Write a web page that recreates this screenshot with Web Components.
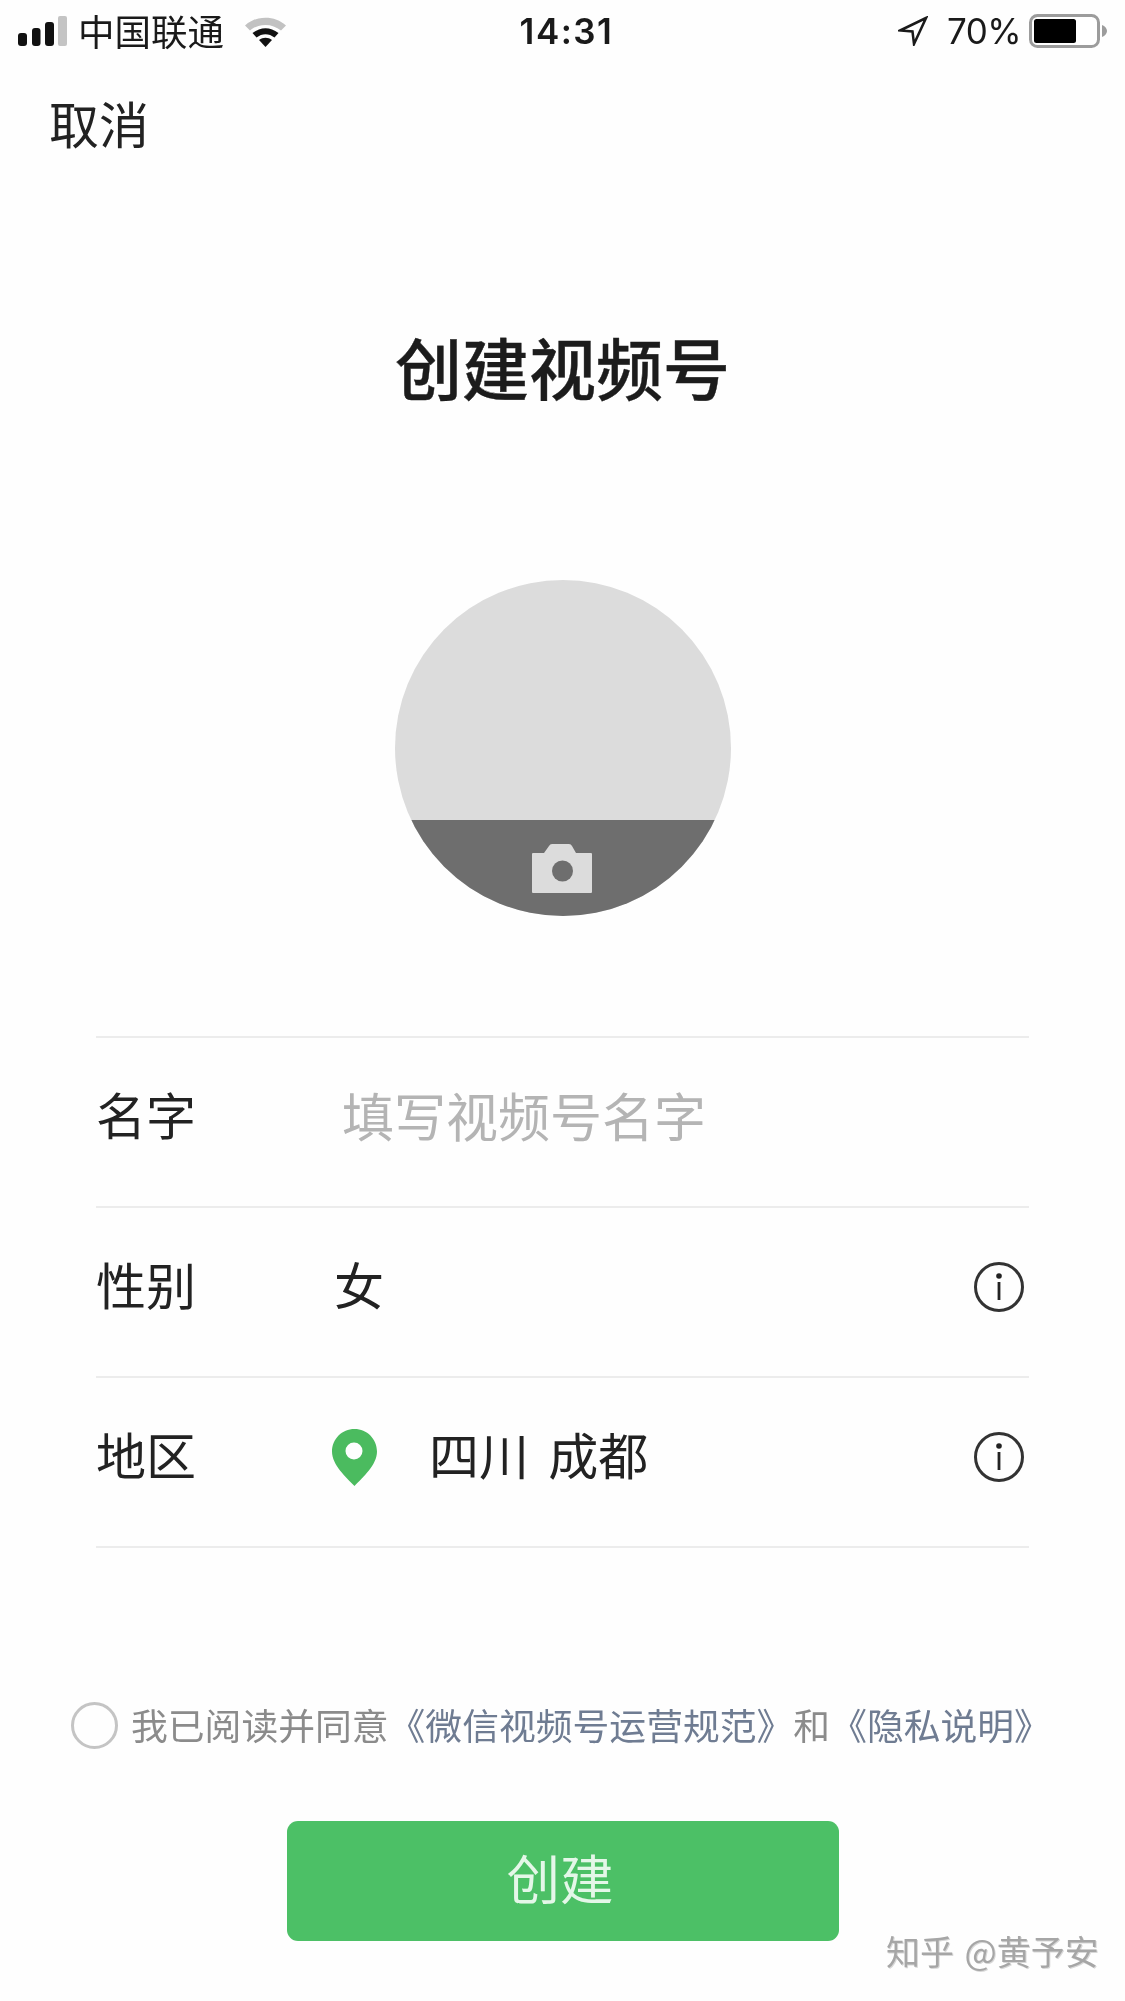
<!DOCTYPE html>
<html lang="zh-CN">
<head>
<meta charset="utf-8">
<title>创建视频号</title>
<style>
html,body{margin:0;padding:0;background:#fefefe}
body{width:1125px;height:2001px;overflow:hidden;font-family:"Noto Sans CJK SC","Noto Sans",sans-serif;color:#222}
app-screen{filter:blur(.55px)}
</style>
</head>
<body>
<app-screen>
  <status-bar carrier="中国联通" time="14:31" battery="70%"></status-bar>
  <nav-action>取消</nav-action>
  <page-title>创建视频号</page-title>
  <avatar-picker></avatar-picker>
  <form-list>
    <form-row label="名字"><span slot="value" style="color:#b4b4b4;font-size:52px;padding:0 0 4px 10px">填写视频号名字</span></form-row>
    <form-row label="性别" info><span slot="value" style="padding:0 0 8px 2px">女</span></form-row>
    <form-row label="地区" info><map-pin slot="value"></map-pin><span slot="value" style="padding-bottom:8px;word-spacing:8px">四川 成都</span></form-row>
  </form-list>
  <agree-line>我已阅读并同意<a slot="l1">《微信视频号运营规范》</a><span slot="and">和</span><a slot="l2">《隐私说明》</a></agree-line>
  <primary-button>创建</primary-button>
  <water-mark>知乎 @黄予安</water-mark>
</app-screen>
<script>
function def(name, html){
  customElements.define(name, class extends HTMLElement{
    constructor(){super();this.attachShadow({mode:'open'});}
    connectedCallback(){
      this.shadowRoot.innerHTML = typeof html==='function'?html(this):html;
    }
  });
}
const CJK='"Noto Sans CJK SC","Noto Sans",sans-serif';

def('app-screen',`<style>:host{display:flex;flex-direction:column;width:1125px;height:2001px;position:relative;background:#fefefe;color:#222}</style><slot></slot>`);

def('status-bar',h=>`<style>
:host{display:grid;grid-template-columns:1fr auto 1fr;align-items:center;height:62px;box-sizing:border-box;padding:0 18px 0 18px;font-family:${CJK};color:#1a1a1a}
.l,.r{display:flex;align-items:center}
.r{justify-content:flex-end}
.c{font:36.500px/1 ${CJK};margin-left:11px}
.w{margin-left:20px}
.t{font:600 35px/1 Inter,"Liberation Sans",sans-serif;letter-spacing:1.500px;margin-left:8px}
.p{font:400 35px/1 Inter,"Liberation Sans",sans-serif;margin:0 8px 0 19px;letter-spacing:-.6px}
svg{display:block}
</style>
<div class="l">
<svg width="49" height="31" viewBox="0 0 49 31"><rect x="0" y="17" width="9" height="13" rx="3" fill="#111"/><rect x="14" y="12" width="8.500" height="18" rx="3" fill="#111"/><rect x="27" y="6" width="9" height="24" rx="3" fill="#111"/><rect x="40" y="0" width="9" height="30" rx="2" fill="#c4c4c4"/></svg>
<span class="c">${h.getAttribute('carrier')}</span>
<svg class="w" width="43" height="32" viewBox="0 0 43 32"><path d="M1 10.500C12 0 31 0 42 10.500L37 15.500C28 8 15 8 6 15.500Z" fill="#c2c2c2"/><path d="M8.500 18C17 11.500 26 11.500 34.500 18L30.500 22.500C25 18 18 18 12.500 22.500Z" fill="#111"/><path d="M15 25C19 22 24 22 28 25L21.500 32Z" fill="#111"/></svg>
</div>
<div class="t">${h.getAttribute('time')}</div>
<div class="r">
<svg width="30" height="30" viewBox="0 0 30 30"><path d="M28 2L2 14.500L14.500 15.500L16 28Z" fill="none" stroke="#1a1a1a" stroke-width="2.500" stroke-linejoin="miter"/></svg>
<span class="p">${h.getAttribute('battery')}</span>
<svg width="78" height="34" viewBox="0 0 78 34"><rect x="1.500" y="1.500" width="68" height="31" rx="7" fill="#fff" stroke="#9c9c9c" stroke-width="3"/><rect x="5" y="5" width="42" height="24" rx="2.500" fill="#000"/><path d="M73 11C76 12 78 14.500 78 17C78 19.500 76 22 73 23Z" fill="#9c9c9c"/></svg>
</div>`);

def('nav-action',`<style>:host{display:block;padding:28px 0 0 49px;height:102px;box-sizing:border-box;font:50px/64px ${CJK};color:#222}</style><slot></slot>`);

def('page-title',`<style>:host{display:block;text-align:center;height:416px;box-sizing:border-box;padding-top:157px;font:500 67px/90px ${CJK};color:#1c1c1c;-webkit-text-stroke:.4px #1c1c1c}</style><slot></slot>`);

def('avatar-picker',`<style>
:host{display:block;width:336px;height:336px;margin:0 auto;border-radius:50%;background:#dcdcdc;overflow:hidden}
.wrap{height:100%;display:flex;flex-direction:column;justify-content:flex-end}
.band{height:96px;background:#6e6e6e;display:flex;justify-content:center;padding-top:24px;box-sizing:border-box}
svg{display:block;margin-right:2px}
</style>
<div class="wrap"><div class="band">
<svg width="60" height="49" viewBox="0 0 60 49"><path d="M1 9H12L17 2Q18 0 20 0H37Q39 0 40 2L44 9H59Q60 9 60 10V48Q60 49 59 49H1Q0 49 0 48V10Q0 9 1 9Z" fill="#dcdcdc"/><circle cx="30.500" cy="27" r="10.500" fill="#6e6e6e"/></svg>
</div></div>`);

def('form-list',`<style>:host{display:block;margin:120px 96px 0 96px;border-top:2px solid #ececec}</style><slot></slot>`);

def('form-row',h=>`<style>
:host{display:grid;grid-template-columns:236px 1fr auto;align-items:center;height:170px;box-sizing:border-box;padding-bottom:10px;border-bottom:2px solid #ececec;font:50px/1 ${CJK};color:#222}
.label{padding:0 0 8px 0}
.val{display:flex;align-items:center}
svg{display:block}
.i{margin-right:5px}
</style>
<div class="label">${h.getAttribute('label')}</div>
<div class="val"><slot name="value"></slot></div>
${h.hasAttribute('info')?`<svg class="i" width="50" height="50" viewBox="0 0 50 50"><circle cx="25" cy="25" r="23.500" fill="none" stroke="#333" stroke-width="3"/><circle cx="25" cy="14" r="2.800" fill="#222"/><rect x="23.600" y="20" width="2.800" height="18" fill="#222"/></svg>`:''}`);

def('map-pin',`<style>:host{display:block;flex:none;width:45px;height:57px;margin-right:52px}svg{display:block}</style>
<svg width="45" height="57" viewBox="0 0 45 57"><path fill-rule="evenodd" d="M22.500 0C10 0 0 10 0 22.500C0 36 14 48 22.500 57C31 48 45 36 45 22.500C45 10 35 0 22.500 0ZM22 13.500A8.500 8.500 0 1 1 22 30.500A8.500 8.500 0 1 1 22 13.500Z" fill="#4bbb5f"/></svg>`);

def('agree-line',`<style>
:host{display:flex;align-items:center;margin:152px 0 0 71px;font:36.800px/48px ${CJK};color:#8b8b8b;white-space:nowrap}
.box{width:47px;height:47px;border:3px solid #c4c4c4;border-radius:50%;box-sizing:border-box;margin-right:13px;flex:none}
.txt{padding-bottom:3px}
::slotted(a){color:#6f7c92}
</style>
<span class="box"></span><span class="txt"><slot></slot><slot name="l1"></slot><slot name="and"></slot><slot name="l2"></slot></span>`);

def('primary-button',`<style>
:host{display:flex;align-items:center;justify-content:center;width:552px;height:120px;box-sizing:border-box;padding:0 5px 8px 0;margin:70px auto 0;background:#4cc066;border-radius:11px;color:#e4f7e8;font:53.500px/1 ${CJK}}
</style><slot></slot>`);

def('water-mark',`<style>
:host{position:absolute;left:886px;top:1931px;font:34px/40px ${CJK};word-spacing:3px;color:#a6a6a6;white-space:nowrap;text-shadow:1px 1px 0 #d8d8d8}
</style><slot></slot>`);
</script>
</body>
</html>
